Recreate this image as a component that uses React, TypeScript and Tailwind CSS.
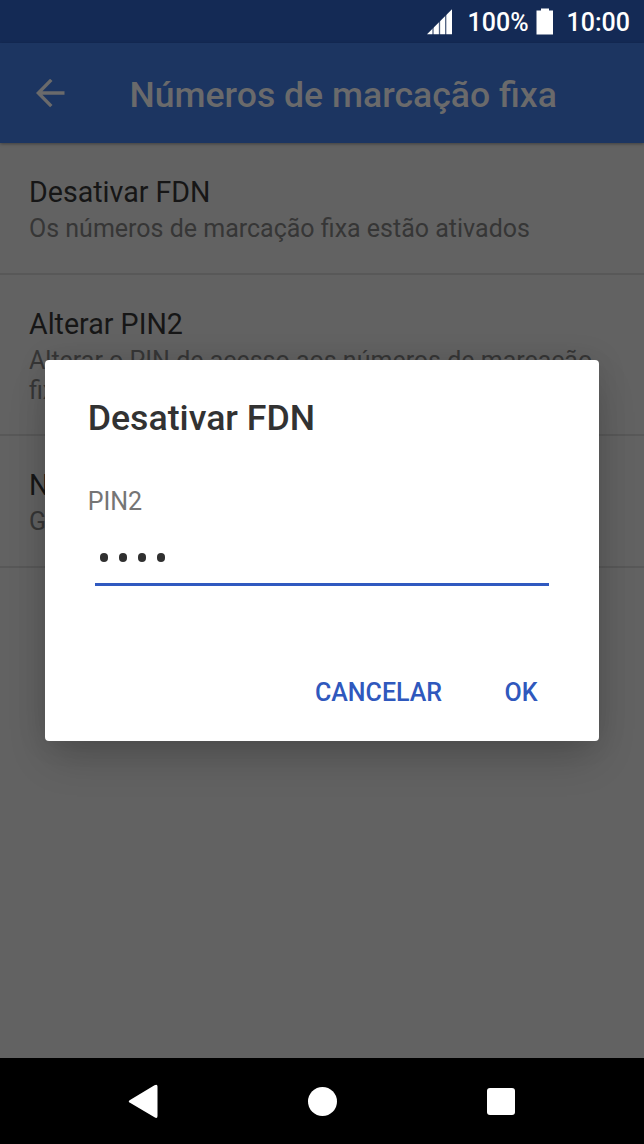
import React from 'react';

const items = [
  {
    title: 'Desativar FDN',
    description: 'Os números de marcação fixa estão ativados',
    height: 'h-[132px]',
  },
  {
    title: 'Alterar PIN2',
    description: 'Alterar o PIN de acesso aos números de marcação fixa',
    height: 'h-[161px]',
  },
  {
    title: 'Números de marcação fixa',
    description: 'Gerir lista de números de marcação fixa',
    height: 'h-[132px]',
  },
];

const StatusBar = () => (
  <div className="flex h-[43px] items-center justify-end bg-[#142a55] pr-[14px] text-[25px] leading-[43px] font-medium text-white">
    <svg className="mr-[15px] h-[26px] w-[26px]" viewBox="0 0 26 26">
      <path d="M0 25.3 25 0.3V25.3Z" fill="#fff" />
      <path d="M6 17v9M12.5 11v15M18.7 5v21" stroke="#142a55" strokeWidth="1.3" opacity=".75" />
    </svg>
    <span className="pt-[2px]">100%</span>
    <svg className="ml-[7px] mr-[13px] h-[27px] w-[18px]" viewBox="0 0 18 27">
      <path d="M5 0.5h8v2h4V26.5H0.5V2.5H5Z" fill="#fff" />
    </svg>
    <span className="pt-[2px]">10:00</span>
  </div>
);

const Header = () => (
  <header className="relative flex h-[100px] items-center bg-[#1c3561] pl-[36px] text-[#6a6a6b] shadow-[0_1px_3px_rgba(0,0,0,0.35)]">
    <svg className="h-[29px] w-[29px]" viewBox="0 0 29 29" fill="none" stroke="currentColor" strokeWidth="3.4">
      <path d="M28.5 14H2M15.3 0.9 2.3 14 15.3 27.1" />
    </svg>
    <h1 className="ml-[64.5px] pt-[3px] text-[35.6px] leading-[42px] font-medium whitespace-nowrap">Números de marcação fixa</h1>
  </header>
);

const Dialog = () => (
  <div
    role="dialog"
    className="absolute top-[360px] left-[44.7px] flex h-[381.3px] w-[554.7px] flex-col rounded-[4px] bg-white px-[43px] pt-[37px] shadow-[0_20px_40px_-6px_rgba(0,0,0,0.2),0_0_30px_rgba(0,0,0,0.1)]"
  >
    <h2 className="text-[35.7px] leading-[42px] font-medium text-[#323232]">Desativar FDN</h2>
    <label className="mt-[48px] text-[25px] leading-[30px] text-[#757575]">PIN2</label>
    <div className="mr-[7px] ml-[7.3px] mt-[15px] flex h-[54px] items-center gap-[11.1px] border-b-[3.6px] border-[#3059c0] pl-[5px]">
      {[0, 1, 2, 3].map((dot) => (
        <span key={dot} className="h-[9px] w-[8px] rounded-full bg-[#303030]" />
      ))}
    </div>
    <div className="mt-[92px] flex justify-end gap-[62.5px] pr-[18.8px] text-[25px] leading-[30px] font-medium text-[#2f58bd]">
      <button>CANCELAR</button>
      <button>OK</button>
    </div>
  </div>
);

const NavBar = () => (
  <nav className="flex h-[86px] items-center justify-between bg-black pr-[129.5px] pl-[128px]">
    <svg className="h-[36px] w-[30px]" viewBox="0 0 30 36">
      <path d="M2 17 26.5 2.2Q29.5 0.7 29.5 3.5V33Q29.5 36 26.5 34.3L2 19.8Q-0.5 18.4 2 17Z" fill="#fff" />
    </svg>
    <span className="h-[29px] w-[29px] rounded-full bg-white" />
    <span className="h-[27px] w-[27.5px] rounded-[3px] bg-white" />
  </nav>
);

const App = () => {
  return (
    <div className="relative flex h-[1144px] w-[644px] flex-col overflow-hidden bg-[#626262] font-[Roboto,sans-serif]">
      <StatusBar />
      <Header />
      <main className="flex-1">
        {items.map((item) => (
          <div key={item.title} className={`${item.height} border-b-2 border-[#585858] px-[29px] pt-[32px]`}>
            <h3 className="text-[28.6px] leading-[34px] text-[#161616]">{item.title}</h3>
            <p className="mt-[5px] text-[25px] leading-[29.5px] text-[#363636]">{item.description}</p>
          </div>
        ))}
      </main>
      <NavBar />
      <Dialog />
    </div>
  );
};

export default App;
